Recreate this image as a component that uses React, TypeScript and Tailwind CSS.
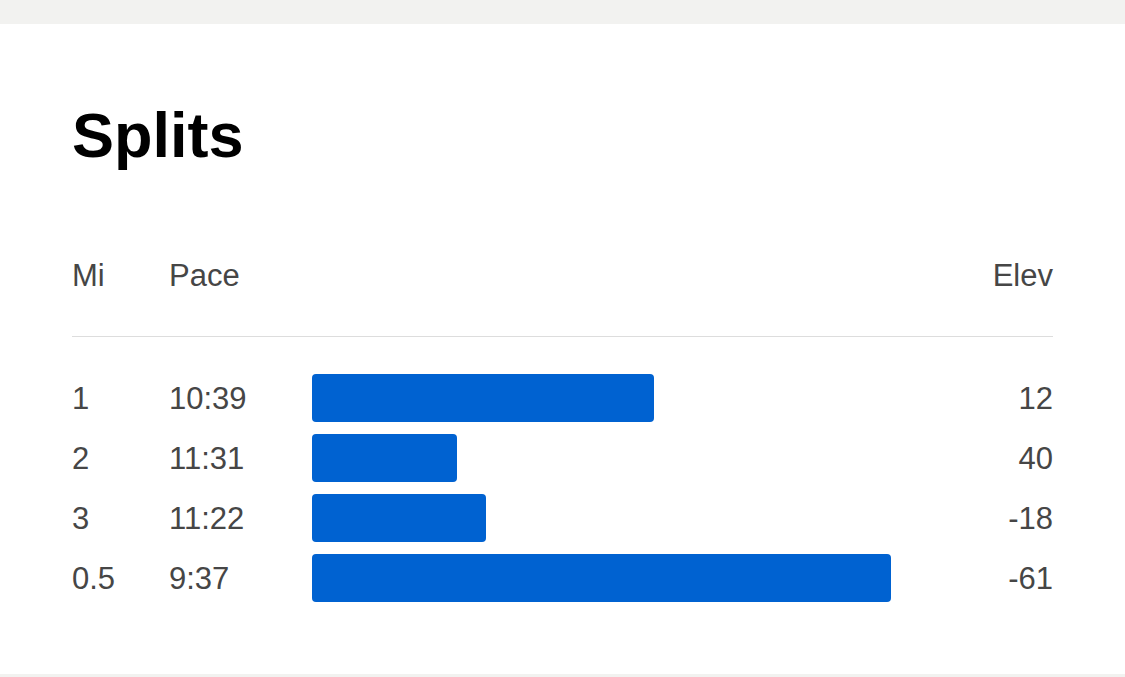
const splits = [
  { mi: "1", pace: "10:39", bar: 342, elev: "12" },
  { mi: "2", pace: "11:31", bar: 145, elev: "40" },
  { mi: "3", pace: "11:22", bar: 174, elev: "-18" },
  { mi: "0.5", pace: "9:37", bar: 579, elev: "-61" },
];

export default function App() {
  return (
    <div
      className="min-h-[677px] bg-[#f2f2f0] pt-6 pb-[3px]"
      style={{ fontFamily: '"Liberation Sans", Arial, sans-serif' }}
    >
      <div className="bg-white px-[72px] pt-[80px] pb-[72px]">
        <h1 className="text-[63px] font-bold leading-none text-black">Splits</h1>

        {/* header */}
        <div className="mt-[93px] grid grid-cols-[97px_143px_1fr_auto] items-center border-b border-[#dddddd] pb-[45px] text-[31px] leading-none text-[#464646]">
          <div>Mi</div>
          <div>Pace</div>
          <div />
          <div className="text-right">Elev</div>
        </div>

        {/* rows */}
        <div className="mt-[37px] flex flex-col gap-3">
          {splits.map((s) => (
            <div
              key={s.mi}
              className="grid h-12 grid-cols-[97px_143px_1fr_auto] items-center text-[31px] leading-none text-[#464646]"
            >
              <div>{s.mi}</div>
              <div>{s.pace}</div>
              <div className="h-12">
                <div className="h-12 rounded bg-[#0062d1]" style={{ width: s.bar }} />
              </div>
              <div className="text-right">{s.elev}</div>
            </div>
          ))}
        </div>
      </div>
    </div>
  );
}
